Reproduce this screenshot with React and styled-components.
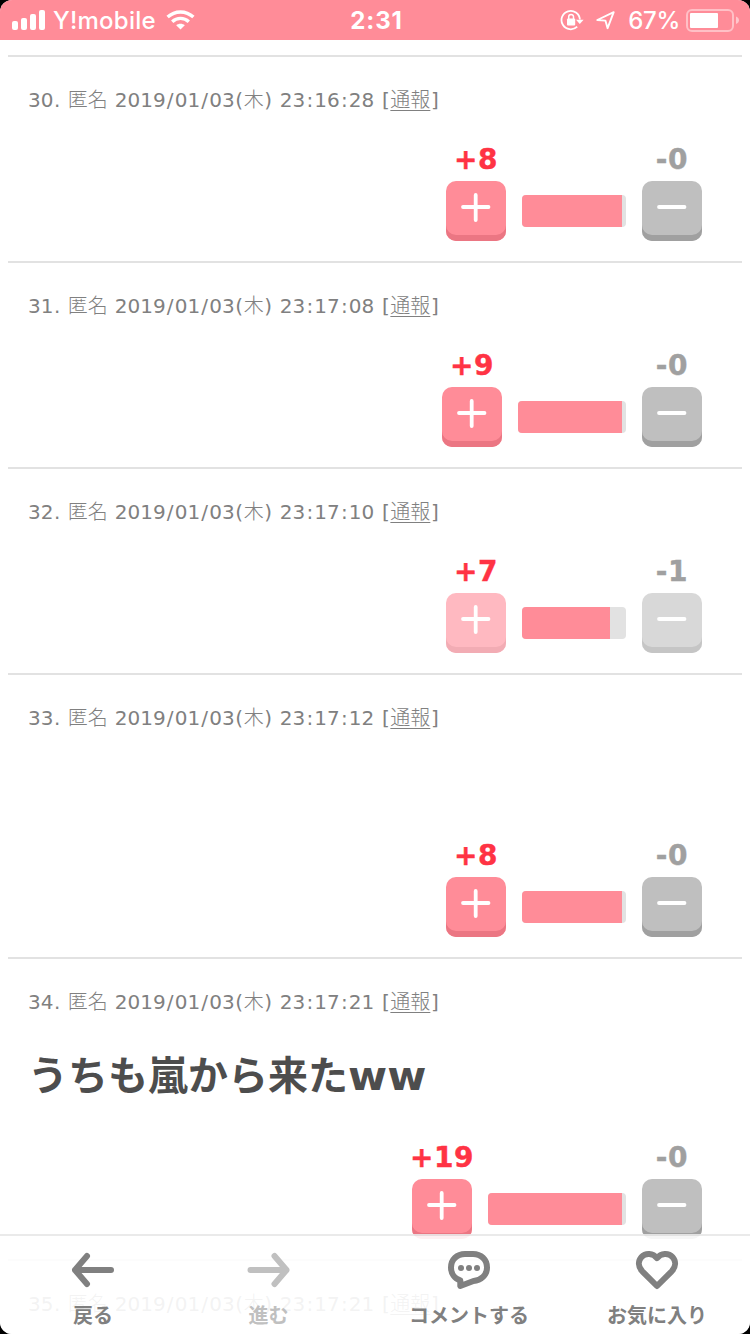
import styled, { createGlobalStyle } from "styled-components";

const GlobalStyle = createGlobalStyle`
  * {
    box-sizing: border-box;
  }
  body {
    margin: 0;
    background: #000;
  }
`;

const Screen = styled.div`
  position: relative;
  width: 750px;
  height: 1334px;
  overflow: hidden;
  border-radius: 12px;
  background: #fff;
  color: #808080;
  font-family: "DejaVu Sans", "Noto Sans CJK JP", sans-serif;
`;

const StatusBar = styled.header`
  height: 40px;
  padding: 0 11px 0 12px;
  display: grid;
  grid-template-columns: 1fr auto 1fr;
  align-items: center;
  background: #ff8c98;
  color: #fff;
  font-family: Inter, sans-serif;
  font-size: 24px;
  font-weight: 500;
  line-height: 40px;

  span {
    padding-top: 2px;
    line-height: 38px;
  }
`;

const StatusGroup = styled.div`
  height: 40px;
  display: flex;
  align-items: center;
  justify-content: ${(props) => (props.$end ? "flex-end" : "flex-start")};

  svg {
    display: block;
    flex: none;
  }
`;

const Carrier = styled.span`
  margin: 0 10px 0 7px;
  letter-spacing: 0.25px;
`;

const Clock = styled.span`
  padding-left: 2px;
  font-weight: 700;
  letter-spacing: 0.9px;
`;

const Percent = styled.span`
  margin: 0 6px 0 13px;
  letter-spacing: -0.3px;
`;

const Comments = styled.main`
  padding: 15px 8px 0;
`;

const Comment = styled.article`
  height: ${(props) => props.$height}px;
  border-top: 2px solid #e2e2e2;
  padding: 28px 40px 20px 20px;
  display: flex;
  flex-direction: column;
`;

const Meta = styled.div`
  height: 30px;
  font-size: 20px;
  line-height: 30px;
  white-space: pre;
`;

const Kanji = styled.span`
  font-family: "Noto Sans CJK JP", sans-serif;
  font-weight: 300;
  line-height: 1;
`;

const Mark = styled.span`
  margin: 0 ${(props) => props.$gap}px;
`;

const Report = styled.a`
  text-decoration: underline;
  text-decoration-thickness: 1px;
  text-underline-offset: 3px;
`;

const Body = styled.p`
  margin: 29px 0 0;
  font-size: 40px;
  font-weight: 700;
  line-height: 60px;
  color: #4d4d4d;
`;

const Latin = styled.span`
  display: inline-block;
  transform: scaleX(1.06);
  transform-origin: left;
`;

const Votes = styled.div`
  margin-top: auto;
  display: flex;
  justify-content: flex-end;
  align-items: flex-end;
  gap: 16px;
`;

const Vote = styled.div`
  width: 60px;
  display: flex;
  flex-direction: column;
  align-items: center;
`;

const Count = styled.span`
  height: 36px;
  margin-bottom: 3px;
  font-size: 28px;
  font-weight: 700;
  line-height: 36px;
  letter-spacing: 0.6px;
  white-space: nowrap;
  color: ${(props) => (props.$minus ? "#a0a0a0" : "#ff3344")};
  -webkit-text-stroke: 0.4px currentColor;
`;

const VoteButton = styled.button`
  width: 60px;
  height: 60px;
  padding: 0;
  border: 0;
  border-radius: 10px;
  background: ${(props) => (props.$minus ? "#bfbfbf" : "#ff8c98")};
  box-shadow: inset 0 -6px 0 ${(props) => (props.$minus ? "#a0a0a0" : "#eb7683")};
  opacity: ${(props) => (props.$voted ? 0.6 : 1)};

  svg {
    display: block;
  }
`;

const Gauge = styled.div`
  width: ${(props) => props.$width}px;
  height: 32px;
  margin-bottom: 14px;
  border-radius: 4px;
  overflow: hidden;
  background: #e2e2e2;
`;

const GaugeFill = styled.div`
  height: 100%;
  background: #ff8c98;
`;

const Toolbar = styled.nav`
  position: absolute;
  left: 0;
  right: 0;
  bottom: 0;
  height: 100px;
  padding-right: 23px;
  display: grid;
  grid-template-columns: 186px 165px 236px 140px;
  border-top: 2px solid rgba(232, 232, 232, 0.9);
  background: rgba(255, 255, 255, 0.9);
  background-clip: padding-box;
`;

const Tab = styled.div`
  padding-top: 12px;
  display: flex;
  flex-direction: column;
  align-items: center;
  gap: 8px;
  font-family: "Noto Sans CJK JP", sans-serif;
  font-size: 20px;
  font-weight: 700;
  line-height: 30px;
  white-space: nowrap;
  color: ${(props) => (props.$disabled ? "#c0c0c0" : "#808080")};

  svg {
    display: block;
  }
`;

const comments = [
  { no: 30, time: "23:16:28", plus: 8, minus: 0, height: 206, bar: 104, fill: 100 },
  { no: 31, time: "23:17:08", plus: 9, minus: 0, height: 206, bar: 108, fill: 104 },
  { no: 32, time: "23:17:10", plus: 7, minus: 1, height: 206, bar: 104, fill: 88, voted: true },
  { no: 33, time: "23:17:12", plus: 8, minus: 0, height: 284, bar: 104, fill: 100 },
  { no: 34, time: "23:17:21", plus: 19, minus: 0, height: 302, bar: 138, fill: 134, body: "うちも嵐から来た", tail: "ww" },
  { no: 35, time: "23:17:21", height: 206 },
];

// side gaps of the narrow glyphs
const gaps = { "/": 1.17, ":": 1.17, "(": 0.64, ")": 0.64, "[": 0.64, "]": 0.64, ".": 0.45, " ": 0.34 };

const spaced = (text) =>
  text.split(/([/:()[\]. ])/).map((part, i) =>
    i % 2 ? <Mark key={i} $gap={gaps[part]}>{part}</Mark> : part
  );

const Signal = () => (
  <svg width="34" height="22" fill="currentColor">
    <rect x="0" y="12" width="6" height="9" rx="2" />
    <rect x="9" y="9" width="6" height="12" rx="2" />
    <rect x="18" y="5" width="6" height="16" rx="2" />
    <rect x="27" y="1" width="6" height="20" rx="2" />
  </svg>
);

const Wifi = () => (
  <svg width="30" height="22" viewBox="0 0 30 22" fill="none" stroke="currentColor" strokeWidth="3.4">
    <path d="M1.600 8.100C9 1.200 20 1.200 27.400 8.100" />
    <path d="M6.200 12.700C11 8.300 18 8.300 22.800 12.700" />
    <path d="M14.500 20.600 10.200 16.200C12.500 14.200 16.500 14.200 18.800 16.200Z" fill="currentColor" stroke="none" />
  </svg>
);

const RotationLock = () => (
  <svg width="24" height="22" viewBox="0 0 24 22" fill="none" stroke="currentColor" strokeWidth="1.800">
    <path d="M17.200 17.600A9.200 9.200 0 1 1 19.900 10.500" />
    <path d="M16 10.800H23.600L19.800 15Z" fill="currentColor" stroke="none" />
    <rect x="7" y="9.600" width="8.200" height="6.800" rx="1" fill="currentColor" stroke="none" />
    <path d="M8.700 10V7.800a2.400 2.400 0 0 1 4.800 0V10" strokeWidth="1.500" />
  </svg>
);

const Location = () => (
  <svg width="20" height="20" viewBox="0 0 20 20" fill="none" stroke="currentColor" strokeWidth="1.900" strokeLinejoin="round">
    <path d="M2.300 10 18.700 2.200 12.600 18.200 10.400 10.600Z" />
  </svg>
);

const Battery = () => (
  <svg width="53" height="24" viewBox="0 0 53 24">
    <rect x="1" y="2" width="46" height="21" rx="5" fill="none" stroke="#fff" strokeOpacity=".45" strokeWidth="2" />
    <rect x="4" y="5" width="28" height="15" rx="1" fill="#fff" />
    <path d="M50 8.500c4 1.500 4 6 0 7.500Z" fill="#fff" fillOpacity=".5" />
  </svg>
);

const Sign = ({ minus }) => (
  <svg width="60" height="60" fill="none" stroke="#fff" strokeWidth="3.800" strokeLinecap="round">
    <path d="M17 26H42.500" />
    {!minus && <path d="M29.700 14V39" />}
  </svg>
);

const Arrow = ({ right }) => (
  <svg width="44" height="44" viewBox="0 0 44 44" fill="none" stroke="currentColor" strokeWidth="6" strokeLinecap="round" strokeLinejoin="round">
    <path d={right ? "M3.500 22H39.500M27.500 8 39.500 22 27.500 36" : "M40 22H4M16 8 4 22 16 36"} />
  </svg>
);

const Bubble = () => (
  <svg width="44" height="44" viewBox="0 0 44 44" fill="none" stroke="currentColor" strokeWidth="6" strokeLinejoin="round">
    <path d="M18 6H26C34 6 40 11.500 40 19.500C40 27 34 32.500 26.500 33L13.300 38V32.300C7.500 30.500 4 25.500 4 19.500C4 11.500 10 6 18 6Z" />
    <g fill="currentColor" stroke="none">
      <circle cx="14" cy="20" r="3" />
      <circle cx="22" cy="20" r="3" />
      <circle cx="30" cy="20" r="3" />
    </g>
  </svg>
);

const Heart = () => (
  <svg width="44" height="44" viewBox="0 0 44 44" fill="none" stroke="currentColor" strokeWidth="6" strokeLinejoin="round">
    <path d="M22 38 7.300 23.300C3 18.800 2.900 13 6.500 9C10.500 4.700 18 5 22 10.200C26 5 33.500 4.700 37.500 9C41.100 13 41 18.800 36.700 23.300Z" />
  </svg>
);

const VoteBox = ({ item, minus }) => (
  <Vote>
    <Count $minus={minus}>{minus ? `-${item.minus}` : `+${item.plus}`}</Count>
    <VoteButton $minus={minus} $voted={item.voted}>
      <Sign minus={minus} />
    </VoteButton>
  </Vote>
);

const App = () => {
  return (
    <>
      <GlobalStyle />
      <Screen>
        <StatusBar>
          <StatusGroup>
            <Signal />
            <Carrier>Y!mobile</Carrier>
            <Wifi />
          </StatusGroup>
          <Clock>2:31</Clock>
          <StatusGroup $end>
            <RotationLock />
            <span style={{ width: 11 }} />
            <Location />
            <Percent>67%</Percent>
            <Battery />
          </StatusGroup>
        </StatusBar>
        <Comments>
          {comments.map((item) => (
            <Comment key={item.no} $height={item.height}>
              <Meta>
                {spaced(`${item.no}. `)}
                <Kanji>匿名</Kanji>
                {spaced(" 2019/01/03(")}
                <Kanji>木</Kanji>
                {spaced(`) ${item.time} [`)}
                <Report>
                  <Kanji>通報</Kanji>
                </Report>
                {spaced("]")}
              </Meta>
              {item.body && (
                <Body>
                  {item.body}
                  <Latin>{item.tail}</Latin>
                </Body>
              )}
              {item.bar && (
                <Votes>
                  <VoteBox item={item} />
                  <Gauge $width={item.bar}>
                    <GaugeFill style={{ width: item.fill }} />
                  </Gauge>
                  <VoteBox item={item} minus />
                </Votes>
              )}
            </Comment>
          ))}
        </Comments>
        <Toolbar>
          <Tab>
            <Arrow />
            戻る
          </Tab>
          <Tab $disabled>
            <Arrow right />
            進む
          </Tab>
          <Tab>
            <Bubble />
            コメントする
          </Tab>
          <Tab>
            <Heart />
            お気に入り
          </Tab>
        </Toolbar>
      </Screen>
    </>
  );
};

export default App;
